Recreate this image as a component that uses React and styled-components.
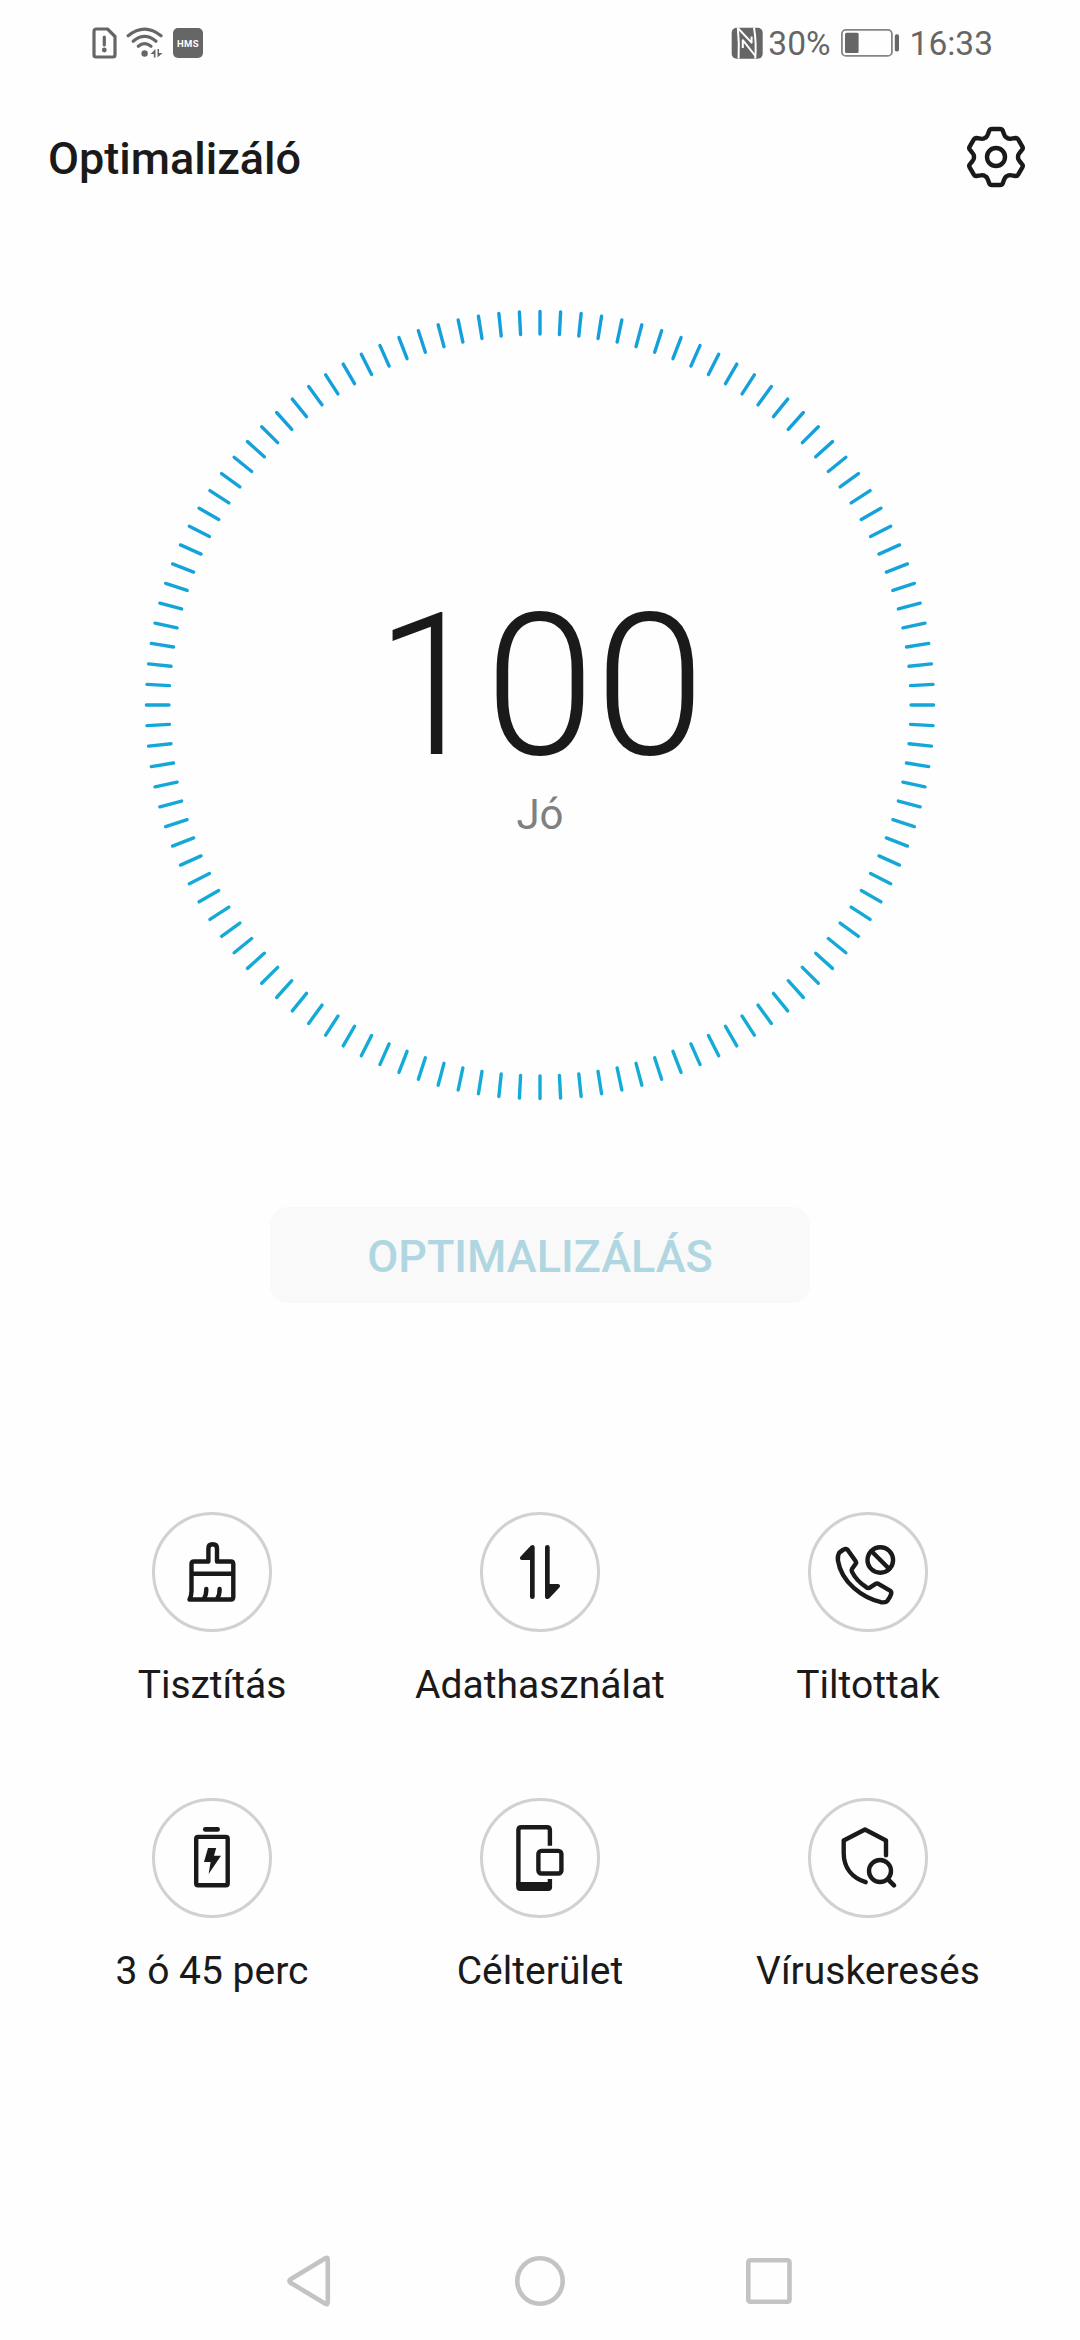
import React from "react";
import styled, { createGlobalStyle } from "styled-components";

const INK = "#1a1a1a";
const STATUS = "#666666";

const GlobalStyle = createGlobalStyle`
  *, *::before, *::after { box-sizing: border-box; }
  body {
    margin: 0;
    background: #fefefe;
    font-family: Roboto, "Noto Sans", sans-serif;
    color: ${INK};
  }
  svg { display: block; flex: none; }
`;

const Screen = styled.main`
  width: 1080px;
  height: 2340px;
  display: flex;
  flex-direction: column;
  background: #fefefe;
  overflow: hidden;
`;

const StatusBar = styled.div`
  height: 86px;
  padding: 0 87px 0 92px;
  display: flex;
  align-items: center;
  justify-content: space-between;
  color: ${STATUS};
`;

const StatusGroup = styled.div`
  display: flex;
  align-items: center;
  gap: ${(p) => p.$gap}px;
`;

const StatusText = styled.span`
  padding-top: 2px;
  font-size: 33.5px;
  line-height: 42px;
`;

const HmsBadge = styled.span`
  width: 30px;
  height: 30px;
  border-radius: 5px;
  background: ${STATUS};
  color: #fefefe;
  display: flex;
  align-items: center;
  justify-content: center;
  font-size: 9.5px;
  font-weight: 700;
  letter-spacing: 0.4px;
`;

const Header = styled.header`
  height: 142px;
  padding: 0 48px;
  display: flex;
  align-items: center;
  justify-content: space-between;
`;

const Title = styled.h1`
  margin: 0;
  padding-top: 3px;
  font-size: 45px;
  line-height: 54px;
  font-weight: 500;
`;

const IconButton = styled.button`
  display: flex;
  padding: 0;
  border: 0;
  background: none;
  color: inherit;
`;

const Gauge = styled.section`
  display: grid;
  place-items: center;
  margin-top: 77px;
  height: 800px;
  & > * { grid-area: 1 / 1; }
`;

const Score = styled.div`
  display: flex;
  flex-direction: column;
  align-items: center;
  padding-top: 16px;
`;

const ScoreValue = styled.span`
  font-size: 198px;
  line-height: 198px;
  font-weight: 300;
`;

const ScoreLabel = styled.span`
  margin-top: 5px;
  font-size: 42px;
  line-height: 50px;
  color: #808080;
`;

const OptimizeButton = styled.button`
  align-self: center;
  margin-top: 102px;
  width: 540px;
  height: 96px;
  padding: 3px 0 0;
  border: 0;
  border-radius: 18px;
  background: #f9f9f9;
  color: #b0d7e1;
  font: 500 45px/54px Roboto, "Noto Sans", sans-serif;
`;

const FeatureGrid = styled.section`
  margin-top: 209px;
  padding: 0 48px;
  display: grid;
  grid-template-columns: repeat(3, 328px);
  grid-auto-rows: 286px;
`;

const Feature = styled.div`
  display: flex;
  flex-direction: column;
  align-items: center;
`;

const FeatureIcon = styled.div`
  width: 120px;
  height: 120px;
  border: 3px solid #d1d1d1;
  border-radius: 50%;
  display: flex;
  align-items: center;
  justify-content: center;
`;

const FeatureLabel = styled.span`
  margin-top: 30px;
  font-size: 39px;
  line-height: 46px;
  white-space: nowrap;
`;

const NavBar = styled.nav`
  margin-top: auto;
  height: 118px;
  display: flex;
  align-items: center;
  justify-content: center;
  gap: 169px;
`;

const Stroked = ({ size = 72, width = 4.4, children }) => (
  <svg
    width={size}
    height={size}
    viewBox={`0 0 ${size} ${size}`}
    fill="none"
    stroke="currentColor"
    strokeWidth={width}
    strokeLinecap="round"
    strokeLinejoin="round"
  >
    {children}
  </svg>
);

const SimAlertIcon = () => (
  <svg width="25" height="32" viewBox="0 0 25 32" fill="none" stroke={STATUS}>
    <path d="M4.5 2H15.5L23 9.5V28Q23 30 21 30H4Q2 30 2 28V4.5Q2 2 4.5 2Z" strokeWidth="3.2" strokeLinejoin="round" />
    <path d="M12.3 10V18" strokeWidth="3.2" strokeLinecap="round" />
    <circle cx="12.3" cy="23" r="2.4" fill={STATUS} stroke="none" />
  </svg>
);

const WifiIcon = () => (
  <svg width="38" height="32" viewBox="0 0 38 32" fill="none" stroke={STATUS} strokeWidth="3.2" strokeLinecap="round">
    <path d="M2.2 8.8Q18.5-4.6 35 8.8" />
    <path d="M7.2 14.3Q18.5 4.6 30 14.3" />
    <path d="M12.3 19.2Q18.5 14 25 19.2" />
    <circle cx="18.6" cy="26.5" r="3.2" fill={STATUS} stroke="none" />
    <path d="M29.5 22V30.5H27.8V27H24.5ZM31.5 22V30.5L36.5 26H33V22Z" fill={STATUS} stroke="none" />
  </svg>
);

const NfcIcon = () => (
  <svg width="32" height="32" viewBox="0 0 32 32">
    <rect x="0.7" y="0.7" width="31" height="31" rx="5" fill={STATUS} />
    <g fill="none" stroke="#fefefe" strokeWidth="2" strokeLinejoin="round">
      <path d="M6.8 0.5Q8.4 16 7.6 31.5" />
      <path d="M6.8 1L20.6 15.6V9.5" />
      <path d="M11.8 21V13.2L24 28.5" />
      <path d="M23 0.5Q25.6 16 24.2 31.5" />
    </g>
  </svg>
);

const BatteryStatusIcon = () => (
  <svg width="59" height="28" viewBox="0 0 59 28">
    <rect x="0.9" y="0.9" width="50" height="26" rx="4" fill="none" stroke="#858585" strokeWidth="1.8" />
    <rect x="4" y="3.7" width="13.6" height="20.4" rx="1.5" fill={STATUS} />
    <rect x="53.8" y="5.2" width="4.2" height="17.4" rx="1.8" fill={STATUS} />
  </svg>
);

/* One sixth of the cog outline, turned about the centre for each tooth. */
const cogPath = () => {
  const rotate = ([x, y], k) => {
    const a = (k * Math.PI) / 3;
    const rx = 36 + x * Math.cos(a) - y * Math.sin(a);
    const ry = 36 + x * Math.sin(a) + y * Math.cos(a);
    return `${rx.toFixed(2)} ${ry.toFixed(2)}`;
  };
  let d = "";
  for (let k = 0; k < 6; k += 1) {
    const p = (x, y) => rotate([x, y], k);
    d += `${k ? "L" : "M"}${p(-8.2, -22.5)}L${p(-6.6, -26.6)}Q${p(-6, -28)} ${p(-4.2, -28)}`;
    d += `L${p(4.2, -28)}Q${p(6, -28)} ${p(6.6, -26.6)}L${p(8.2, -22.5)}`;
    d += `Q${p(9.4, -19.4)} ${p(11.1, -19.2)}Q${p(11.9, -17.8)} ${p(15.4, -18.35)}`;
  }
  return `${d}Z`;
};

const SettingsIcon = () => (
  <Stroked>
    <path d={cogPath()} />
    <circle cx="36" cy="36" r="9" />
  </Stroked>
);

const BrushIcon = () => (
  <Stroked>
    <path d="M15.5 55V28Q15.5 25.5 18 25.5H32.4V12.4Q32.4 8.2 36.7 8.2Q41 8.2 41 12.4V25.5H54.8Q57.3 25.5 57.3 28V61Q57.3 63.5 54.8 63.5H13.5Q15.5 60 15.5 55Z" />
    <path d="M15.5 37.7H57.3" strokeLinecap="butt" />
    <path d="M30.3 53Q30.3 59 28.2 62M43.6 53Q43.6 59 41.5 62" />
  </Stroked>
);

const DataIcon = () => (
  <svg width="72" height="72" viewBox="0 0 72 72" fill="currentColor">
    <path d="M27 9.5Q30.7 7.8 30.7 11.5V60.7A2.35 2.35 0 0 1 26 60.7V24H17.7Q14.8 23.4 16.6 20.6Z" />
    <path d="M45 62.5Q41 64.2 41 60.5V11.3A2.35 2.35 0 0 1 45.7 11.3V48H54Q57.2 48.6 55.4 51.4Z" />
  </svg>
);

const BlockedCallIcon = () => (
  <Stroked>
    <path d="M11 13.9L13.2 13Q14.7 12.6 15.7 13.9L23.7 25.2Q24.6 26.5 23.7 27.8L20.1 32.8Q19.2 34.1 19.9 35.6Q24.2 44.5 34.2 51.2Q36.3 52.8 38.2 51.4L43.6 47.9Q44.9 47 46.4 47.8L58 54.6Q59.8 55.8 59.2 57.7Q58.5 60.5 55.6 64.6Q53.8 66.9 49 66.2C31 62 9.5 47 5.9 24.4Q5.4 19.5 7.3 16.6Z" />
    <circle cx="48.3" cy="24" r="12.8" />
    <path d="M39.3 15L57.3 33" />
  </Stroked>
);

const BatteryIcon = () => (
  <Stroked>
    <rect x="20.2" y="14.9" width="31.5" height="48.3" rx="1.8" />
    <path d="M29.3 7.4H41.6" strokeWidth="4.7" />
    <path d="M32 26H40.2L38 33.7H45L32.6 52L34.6 40H28Z" fill="currentColor" stroke="none" />
  </Stroked>
);

const DevicesIcon = () => (
  <Stroked>
    <path d="M45.9 23.7V8.2Q45.9 5.2 42.9 5.2H17.4Q14.4 5.2 14.4 8.2V64" strokeLinecap="butt" />
    <path d="M12.2 60H43.7V57H48.1V65Q48.1 69 44.1 69H16.2Q12.2 69 12.2 65Z" fill="currentColor" stroke="none" />
    <rect x="34.4" y="28.9" width="23" height="22.6" rx="3" />
  </Stroked>
);

const VirusScanIcon = () => (
  <Stroked>
    <path d="M54 33.3V18.5L33 7.5L11.7 18.5V31C11.7 46 20.5 56 33.7 60.2" />
    <circle cx="48" cy="49" r="11" />
    <path d="M57 58.3L62 63.4" strokeWidth="4.6" />
  </Stroked>
);

const TICKS = 120;

const Dial = () => (
  <svg width="800" height="800" viewBox="0 0 800 800" stroke="url(#dialStroke)" strokeWidth="3.4" strokeLinecap="round">
    <defs>
      <linearGradient id="dialStroke" gradientUnits="userSpaceOnUse" x1="0" y1="0" x2="0" y2="800">
        <stop offset="0" stopColor="#149fdc" />
        <stop offset="1" stopColor="#14acd6" />
      </linearGradient>
    </defs>
    {Array.from({ length: TICKS }, (_, i) => {
      const a = (i * 2 * Math.PI) / TICKS;
      const s = Math.sin(a);
      const c = Math.cos(a);
      return <line key={i} x1={400 + 371 * s} y1={400 - 371 * c} x2={400 + 393.6 * s} y2={400 - 393.6 * c} />;
    })}
  </svg>
);

const FEATURES = [
  { label: "Tisztítás", Icon: BrushIcon },
  { label: "Adathasználat", Icon: DataIcon },
  { label: "Tiltottak", Icon: BlockedCallIcon },
  { label: "3 ó 45 perc", Icon: BatteryIcon },
  { label: "Célterület", Icon: DevicesIcon },
  { label: "Víruskeresés", Icon: VirusScanIcon },
];

const NavIcon = styled.svg.attrs({ width: 60, height: 60, viewBox: "0 0 60 60" })`
  fill: none;
  stroke: #c3c3c3;
  stroke-width: 4.6;
  stroke-linejoin: round;
`;

export default function App() {
  return (
    <Screen>
      <GlobalStyle />
      <StatusBar>
        <StatusGroup $gap={9}>
          <SimAlertIcon />
          <WifiIcon />
          <HmsBadge>HMS</HmsBadge>
        </StatusGroup>
        <StatusGroup $gap={10}>
          <StatusGroup $gap={5}>
            <NfcIcon />
            <StatusText>30%</StatusText>
          </StatusGroup>
          <BatteryStatusIcon />
          <StatusText>16:33</StatusText>
        </StatusGroup>
      </StatusBar>
      <Header>
        <Title>Optimalizáló</Title>
        <IconButton aria-label="Beállítások">
          <SettingsIcon />
        </IconButton>
      </Header>
      <Gauge>
        <Dial />
        <Score>
          <ScoreValue>100</ScoreValue>
          <ScoreLabel>Jó</ScoreLabel>
        </Score>
      </Gauge>
      <OptimizeButton>OPTIMALIZÁLÁS</OptimizeButton>
      <FeatureGrid>
        {FEATURES.map(({ label, Icon }) => (
          <Feature key={label}>
            <FeatureIcon>
              <Icon />
            </FeatureIcon>
            <FeatureLabel>{label}</FeatureLabel>
          </Feature>
        ))}
      </FeatureGrid>
      <NavBar>
        <NavIcon>
          <path d="M44.4 7.2Q46.8 5.8 46.8 9V51Q46.8 54.2 44.4 52.8L10 32Q6.6 30 10 28Z" />
        </NavIcon>
        <NavIcon>
          <circle cx="30" cy="30" r="22.7" />
        </NavIcon>
        <NavIcon>
          <rect x="9.3" y="9.2" width="41.2" height="41.6" rx="2" />
        </NavIcon>
      </NavBar>
    </Screen>
  );
}
